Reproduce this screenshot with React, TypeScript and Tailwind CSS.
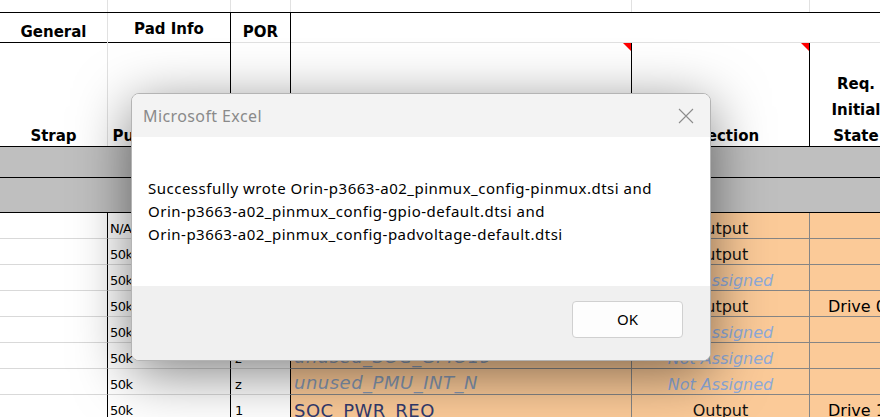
import React from 'react';

type DataRow = {
  pull: string;
  por: string;
  signal: string;
  unused?: boolean;
  direction: string;
  state: string;
};

const rows: DataRow[] = [
  { pull: 'N/A', por: '', signal: '', direction: 'Output', state: '' },
  { pull: '50k', por: '0', signal: '', direction: 'Output', state: '' },
  { pull: '50k', por: 'z', signal: '', direction: 'Not Assigned', state: '' },
  { pull: '50k', por: '0', signal: '', direction: 'Output', state: 'Drive 0' },
  { pull: '50k', por: 'z', signal: '', direction: 'Not Assigned', state: '' },
  { pull: '50k', por: 'z', signal: 'unused_SOC_GPIO19', unused: true, direction: 'Not Assigned', state: '' },
  { pull: '50k', por: 'z', signal: 'unused_PMU_INT_N', unused: true, direction: 'Not Assigned', state: '' },
  { pull: '50k', por: '1', signal: 'SOC_PWR_REQ', direction: 'Output', state: 'Drive 1' },
];

const CommentMark: React.FC = () => (
  <svg className="absolute top-0 right-0" width="8" height="8" viewBox="0 0 8 8">
    <polygon points="0,0 8,0 8,8" fill="#ff0000" />
  </svg>
);

const App: React.FC = () => {
  return (
    <div className="relative w-[880px] h-[417px] overflow-hidden bg-white font-['DejaVu_Sans',sans-serif] text-black">
      {/* sheet */}
      <div className="flex flex-col w-[1000px]">
        {/* partial row above headers */}
        <div className="flex h-[13px] border-b border-black">
          <div className="w-[108px] border-r border-[#e1e1e1]" />
          <div className="w-[123px] border-r border-[#e1e1e1]" />
          <div className="w-[60px] border-r border-[#e1e1e1]" />
          <div className="w-[341px] border-r border-[#e1e1e1]" />
          <div className="w-[178px] border-r border-[#e1e1e1]" />
          <div className="w-[92px]" />
        </div>

        {/* header */}
        <div className="flex h-[134px] border-b border-black font-bold text-[15px] leading-[20px]">
          <div className="w-[108px] flex flex-col border-r border-[#e1e1e1]">
            <div className="h-[30px] border-b border-black flex items-end justify-center">General</div>
            <div className="flex-1 flex items-end justify-center">Strap</div>
          </div>
          <div className="w-[123px] flex flex-col border-r border-black">
            <div className="h-[30px] border-b border-black flex items-end justify-center pb-[3px]">Pad Info</div>
            <div className="flex-1 flex items-end justify-center">Pull Up/Down</div>
          </div>
          <div className="w-[60px] flex flex-col border-r border-black">
            <div className="h-[30px] border-b border-[#e1e1e1] flex items-end justify-center">POR</div>
            <div className="flex-1" />
          </div>
          <div className="flex flex-col">
            <div className="h-[30px] border-b border-[#e1e1e1]" />
            <div className="flex-1 flex">
              <div className="relative w-[341px] border-r border-black">
                <CommentMark />
              </div>
              <div className="relative w-[178px] border-r border-black flex items-end justify-center">
                <CommentMark />
                Direction
              </div>
              <div className="w-[92px] flex items-end justify-center text-center leading-[26px]">
                <span className="translate-y-[3px] -mt-[4px]">
                  Req.
                  <br />
                  Initial
                  <br />
                  State
                </span>
              </div>
            </div>
          </div>
        </div>

        {/* grey section bands */}
        <div className="h-[31px] bg-[#bfbfbf] border-b border-black" />
        <div className="h-[35px] bg-[#bfbfbf] border-b border-black" />

        {/* data rows */}
        {rows.map((r, i) => (
          <div key={i} className="flex h-[26px]">
            <div className="w-[108px] border-r border-b border-r-black border-b-[#d9d9d9]" />
            <div className="w-[123px] border-r border-b border-r-black border-b-[#d9d9d9] flex items-end pl-[2px] text-[13px] tracking-[-0.5px] leading-[18px]">
              {r.pull}
            </div>
            <div className="w-[60px] border-r border-b border-r-black border-b-[#d9d9d9] flex items-end pl-[4px] text-[13px] leading-[18px]">
              {r.por}
            </div>
            <div className="w-[341px] bg-[#fbca98] border-r border-b border-[#858585] flex items-end pl-[3px] text-[18px] tracking-[0.5px] leading-[22px]">
              {r.signal && (
                <span className={r.unused ? 'italic text-[#8496b0]' : 'translate-y-[2px] text-[#323a6e]'}>
                  {r.signal}
                </span>
              )}
            </div>
            <div className="w-[178px] bg-[#fbca98] border-r border-b border-[#858585] flex items-end justify-center text-[16px] leading-[20px]">
              {r.direction === 'Output' ? (
                <span className="translate-y-[1px] text-[#111]">{r.direction}</span>
              ) : (
                <span className="translate-y-[1px] italic text-[#8eaadb]">{r.direction}</span>
              )}
            </div>
            <div className="w-[92px] bg-[#fbca98] border-b border-[#858585] flex items-end pl-[18px] text-[16px] leading-[20px]">
              <span className="translate-y-[1px]">{r.state}</span>
            </div>
          </div>
        ))}
      </div>

      {/* message box */}
      <div className="absolute left-[131px] top-[93px] w-[580px] h-[268px] flex flex-col overflow-hidden rounded-[8px] border border-[#b4b4b4] bg-white shadow-[0_12px_55px_rgba(0,0,0,0.5)] font-['Noto_Sans',sans-serif]">
        <div className="h-[43px] bg-[#f3f3f3] flex items-center justify-between pl-[11px] pr-[16px]">
          <span className="text-[16px] tracking-[0.4px] text-[#8a8a8a]">Microsoft Excel</span>
          <svg width="16" height="16" viewBox="0 0 16 16" className="text-[#8c8c8c]">
            <path d="M1 1 L15 15 M15 1 L1 15" stroke="currentColor" strokeWidth="1.1" fill="none" />
          </svg>
        </div>
        <div className="h-[149px] bg-white pt-[40px] pl-[16px] text-[15px] tracking-[0.5px] leading-[23px] text-black">
          <p>Successfully wrote Orin-p3663-a02_pinmux_config-pinmux.dtsi and</p>
          <p>Orin-p3663-a02_pinmux_config-gpio-default.dtsi and</p>
          <p>Orin-p3663-a02_pinmux_config-padvoltage-default.dtsi</p>
        </div>
        <div className="flex-1 bg-[#f0f0f0] flex justify-end items-start pt-[15px] pr-[27px]">
          <button className="w-[111px] h-[37px] rounded-[4px] border border-[#d0d0d0] bg-[#fdfdfd] text-[15px] text-black">
            OK
          </button>
        </div>
      </div>
    </div>
  );
};

export default App;
